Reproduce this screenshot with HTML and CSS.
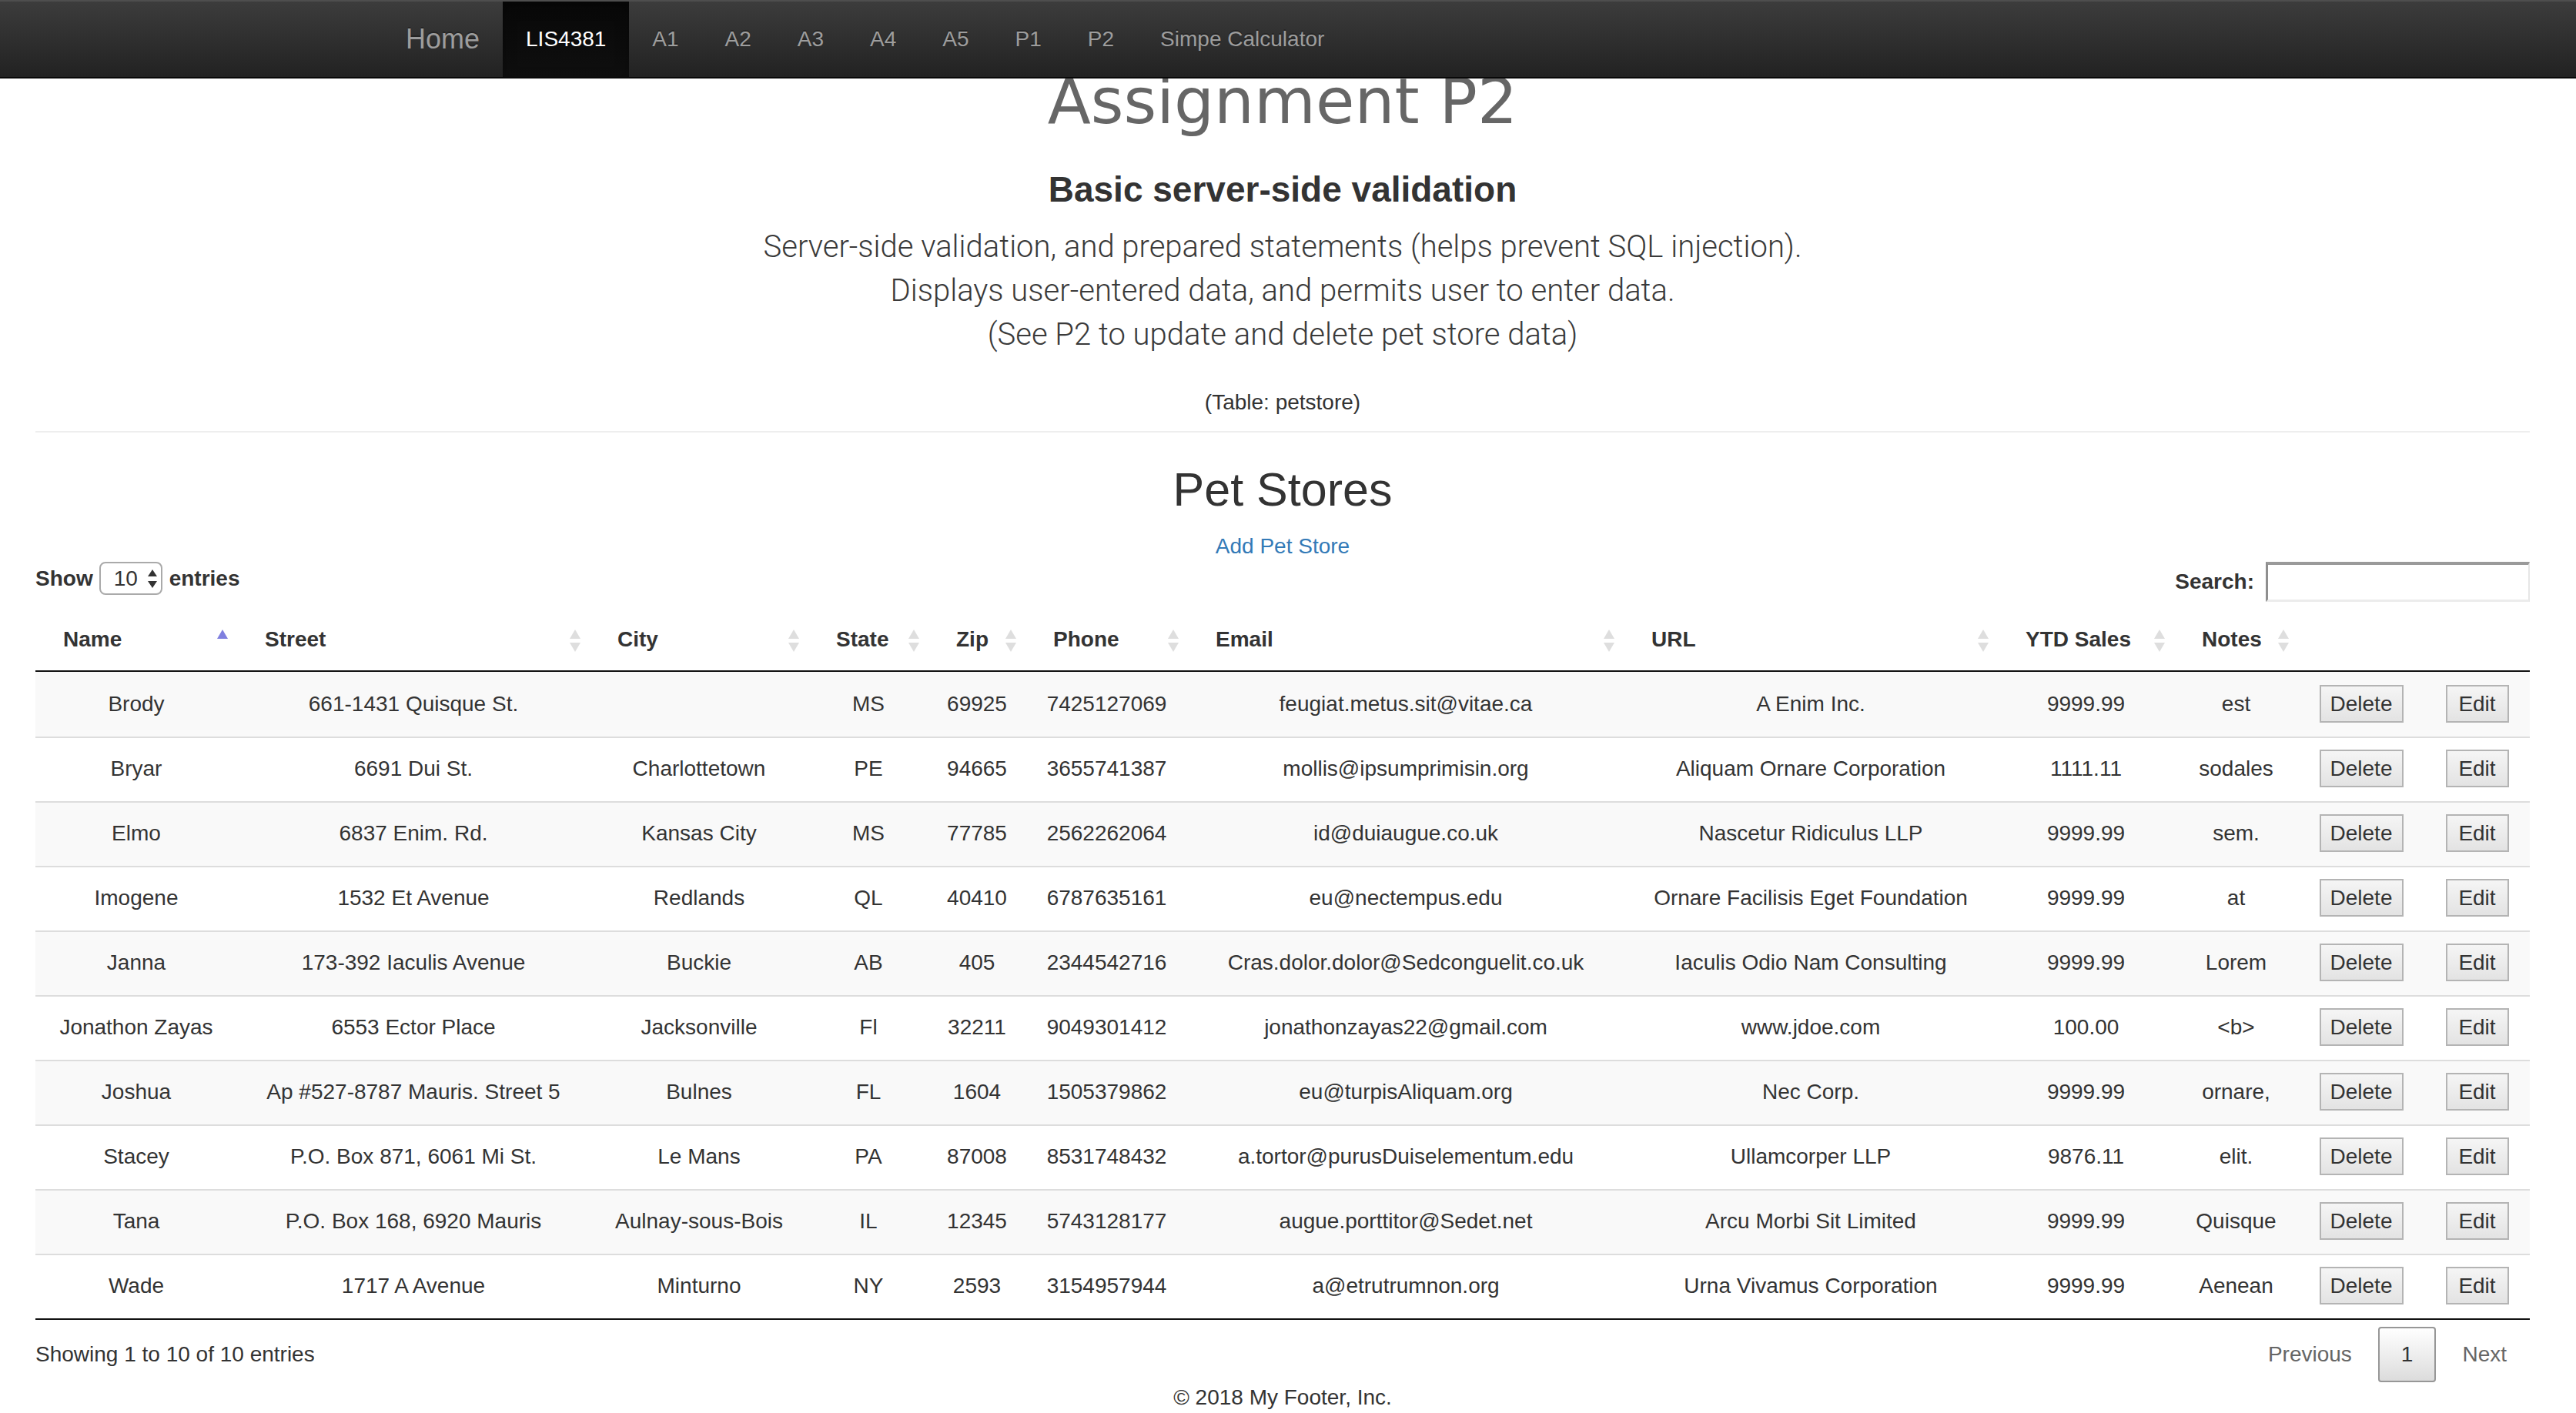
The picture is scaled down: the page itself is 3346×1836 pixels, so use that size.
FILE: index.html
```html
<!DOCTYPE html>
<html lang="en">
<head>
<meta charset="utf-8">
<title>Assignment P2</title>
<link rel="stylesheet" href="styles.css">
</head>
<body>
<nav class="navbar">
  <a class="brand" href="#">Home</a>
  <ul class="nav">
    <li class="active"><a href="#">LIS4381</a></li>
    <li><a href="#">A1</a></li>
    <li><a href="#">A2</a></li>
    <li><a href="#">A3</a></li>
    <li><a href="#">A4</a></li>
    <li><a href="#">A5</a></li>
    <li><a href="#">P1</a></li>
    <li><a href="#">P2</a></li>
    <li><a href="#">Simpe Calculator</a></li>
  </ul>
</nav>

<main class="page">
  <header class="intro">
    <h1 class="title">Assignment P2</h1>
    <h2 class="subtitle">Basic server-side validation</h2>
    <p class="lead">Server-side validation, and prepared statements (helps prevent SQL injection).<br>Displays user-entered data, and permits user to enter data.<br>(See P2 to update and delete pet store data)</p>
    <p class="table-name">(Table: petstore)</p>
  </header>

  <hr class="divider">

  <section class="stores">
    <h2 class="stores-title">Pet Stores</h2>
    <a class="add-link" href="#">Add Pet Store</a>

    <div class="dt-controls">
      <label class="dt-length">Show
        <span class="len-select"><span class="len-value">10</span>
          <svg class="len-arrows" width="14" height="24" viewBox="0 0 14 24"><path d="M7 0 L13 9 L1 9 Z" fill="#333"/><path d="M1 15 L13 15 L7 24 Z" fill="#333"/></svg>
        </span>entries</label>
      <label class="dt-filter">Search:<input class="search-input" type="search"></label>
    </div>

    <table class="data">
      <colgroup>
        <col class="c-name"><col class="c-street"><col class="c-city"><col class="c-state"><col class="c-zip"><col class="c-phone"><col class="c-email"><col class="c-url"><col class="c-ytd"><col class="c-notes"><col class="c-del"><col class="c-edit">
      </colgroup>
      <thead>
        <tr>
          <th class="sort-asc">Name</th>
          <th class="sortable">Street</th>
          <th class="sortable">City</th>
          <th class="sortable">State</th>
          <th class="sortable">Zip</th>
          <th class="sortable">Phone</th>
          <th class="sortable">Email</th>
          <th class="sortable">URL</th>
          <th class="sortable">YTD Sales</th>
          <th class="sortable">Notes</th>
          <th></th>
          <th></th>
        </tr>
      </thead>
      <tbody>
        <tr class="odd"><td>Brody</td><td>661-1431 Quisque St.</td><td></td><td>MS</td><td>69925</td><td>7425127069</td><td>feugiat.metus.sit@vitae.ca</td><td>A Enim Inc.</td><td>9999.99</td><td>est</td><td><button class="btn btn-delete">Delete</button></td><td><button class="btn btn-edit">Edit</button></td></tr>
        <tr><td>Bryar</td><td>6691 Dui St.</td><td>Charlottetown</td><td>PE</td><td>94665</td><td>3655741387</td><td>mollis@ipsumprimisin.org</td><td>Aliquam Ornare Corporation</td><td>1111.11</td><td>sodales</td><td><button class="btn btn-delete">Delete</button></td><td><button class="btn btn-edit">Edit</button></td></tr>
        <tr class="odd"><td>Elmo</td><td>6837 Enim. Rd.</td><td>Kansas City</td><td>MS</td><td>77785</td><td>2562262064</td><td>id@duiaugue.co.uk</td><td>Nascetur Ridiculus LLP</td><td>9999.99</td><td>sem.</td><td><button class="btn btn-delete">Delete</button></td><td><button class="btn btn-edit">Edit</button></td></tr>
        <tr><td>Imogene</td><td>1532 Et Avenue</td><td>Redlands</td><td>QL</td><td>40410</td><td>6787635161</td><td>eu@nectempus.edu</td><td>Ornare Facilisis Eget Foundation</td><td>9999.99</td><td>at</td><td><button class="btn btn-delete">Delete</button></td><td><button class="btn btn-edit">Edit</button></td></tr>
        <tr class="odd"><td>Janna</td><td>173-392 Iaculis Avenue</td><td>Buckie</td><td>AB</td><td>405</td><td>2344542716</td><td>Cras.dolor.dolor@Sedconguelit.co.uk</td><td>Iaculis Odio Nam Consulting</td><td>9999.99</td><td>Lorem</td><td><button class="btn btn-delete">Delete</button></td><td><button class="btn btn-edit">Edit</button></td></tr>
        <tr><td>Jonathon Zayas</td><td>6553 Ector Place</td><td>Jacksonville</td><td>Fl</td><td>32211</td><td>9049301412</td><td>jonathonzayas22@gmail.com</td><td>www.jdoe.com</td><td>100.00</td><td>&lt;b&gt;</td><td><button class="btn btn-delete">Delete</button></td><td><button class="btn btn-edit">Edit</button></td></tr>
        <tr class="odd"><td>Joshua</td><td>Ap #527-8787 Mauris. Street 5</td><td>Bulnes</td><td>FL</td><td>1604</td><td>1505379862</td><td>eu@turpisAliquam.org</td><td>Nec Corp.</td><td>9999.99</td><td>ornare,</td><td><button class="btn btn-delete">Delete</button></td><td><button class="btn btn-edit">Edit</button></td></tr>
        <tr><td>Stacey</td><td>P.O. Box 871, 6061 Mi St.</td><td>Le Mans</td><td>PA</td><td>87008</td><td>8531748432</td><td>a.tortor@purusDuiselementum.edu</td><td>Ullamcorper LLP</td><td>9876.11</td><td>elit.</td><td><button class="btn btn-delete">Delete</button></td><td><button class="btn btn-edit">Edit</button></td></tr>
        <tr class="odd"><td>Tana</td><td>P.O. Box 168, 6920 Mauris</td><td>Aulnay-sous-Bois</td><td>IL</td><td>12345</td><td>5743128177</td><td>augue.porttitor@Sedet.net</td><td>Arcu Morbi Sit Limited</td><td>9999.99</td><td>Quisque</td><td><button class="btn btn-delete">Delete</button></td><td><button class="btn btn-edit">Edit</button></td></tr>
        <tr><td>Wade</td><td>1717 A Avenue</td><td>Minturno</td><td>NY</td><td>2593</td><td>3154957944</td><td>a@etrutrumnon.org</td><td>Urna Vivamus Corporation</td><td>9999.99</td><td>Aenean</td><td><button class="btn btn-delete">Delete</button></td><td><button class="btn btn-edit">Edit</button></td></tr>
      </tbody>
    </table>

    <div class="dt-bottom">
      <div class="dt-info">Showing 1 to 10 of 10 entries</div>
      <div class="paginate">
        <a class="pg pg-disabled">Previous</a>
        <a class="pg pg-current">1</a>
        <a class="pg pg-disabled">Next</a>
      </div>
    </div>
  </section>

  <footer class="footer">© 2018 My Footer, Inc.</footer>
</main>
</body>
</html>
```
FILE: styles.css
```css
html, body {
  margin: 0;
  padding: 0;
  overflow: hidden;
}

body {
  font-family: "Liberation Sans", Arial, sans-serif;
  font-size: 28px;
  line-height: 40px;
  color: #333;
  background: #fff;
}

/* ---------- navbar ---------- */
.navbar {
  position: fixed;
  top: 0;
  left: 0;
  right: 0;
  z-index: 10;
  height: 98px;
  display: flex;
  padding-left: 497px;
  background: linear-gradient(#3c3c3c, #222);
  border-top: 2px solid #4e4e4e;
  border-bottom: 2px solid #080808;
}

.brand {
  font-size: 36px;
  line-height: 98px;
  padding: 0 30px;
  color: #9d9d9d;
  text-decoration: none;
  text-shadow: 0 -2px 0 rgba(0, 0, 0, .25);
}

.nav {
  display: flex;
  list-style: none;
  margin: 0;
  padding: 0;
}

.nav a {
  display: block;
  padding: 0 30px;
  line-height: 98px;
  font-size: 28px;
  color: #9d9d9d;
  text-decoration: none;
  text-shadow: 0 -2px 0 rgba(0, 0, 0, .25);
}

.nav .active a {
  color: #fff;
  background: linear-gradient(#080808, #0f0f0f);
  box-shadow: inset 0 6px 18px rgba(0, 0, 0, .25);
}

/* ---------- page ---------- */
.page {
  padding: 87px 60px 0 46px;
}

.intro {
  text-align: center;
}

.title {
  margin: 0;
  font-family: "DejaVu Sans", sans-serif;
  font-weight: normal;
  font-size: 82px;
  line-height: 90px;
  color: #666;
}

.subtitle {
  margin: 44px 0 0;
  font-size: 46px;
  line-height: 50px;
  font-weight: bold;
  color: #333;
}

.lead {
  margin: 21px 0 0;
  font-family: Roboto, "Liberation Sans", sans-serif;
  font-weight: 300;
  font-size: 40px;
  line-height: 57px;
  color: #3a3a3a;
}

.table-name {
  margin: 40px 0 0;
}

.divider {
  margin: 17px 0 0;
  border: 0;
  border-top: 2px solid #eee;
  height: 0;
}

.stores-title {
  margin: 41px 0 0;
  font-size: 61px;
  line-height: 67px;
  font-weight: normal;
  text-align: center;
  color: #333;
}

.add-link {
  display: block;
  width: max-content;
  margin: 20px auto 0;
  color: #337ab7;
  text-decoration: none;
}

/* ---------- datatable controls ---------- */
.dt-controls {
  display: flex;
  justify-content: space-between;
  align-items: flex-start;
  height: 52px;
  margin-bottom: 10px;
}

.dt-length,
.dt-filter {
  display: flex;
  align-items: center;
  font-weight: bold;
}

.dt-length {
  height: 43px;
}

.len-select {
  display: inline-flex;
  align-items: center;
  box-sizing: border-box;
  width: 82px;
  height: 43px;
  margin: 0 9px 0 8px;
  padding-left: 17px;
  border: 2px solid #aaa;
  border-radius: 8px;
  font-weight: normal;
}

.len-arrows {
  margin-left: 12px;
}

.search-input {
  box-sizing: border-box;
  width: 343px;
  height: 52px;
  margin: 0 0 0 15px;
  border-style: solid;
  border-width: 4px 2px 3px 3px;
  border-color: #9a9a9a #e6e6e6 #ececec #8f8f8f;
  background: #fff;
}

/* ---------- table ---------- */
.data {
  width: 100%;
  table-layout: fixed;
  border-collapse: separate;
  border-spacing: 0;
  border-bottom: 2px solid #111;
}

.c-name { width: 262px; }
.c-street { width: 458px; }
.c-city { width: 284px; }
.c-state { width: 156px; }
.c-zip { width: 126px; }
.c-phone { width: 211px; }
.c-email { width: 566px; }
.c-url { width: 486px; }
.c-ytd { width: 229px; }
.c-notes { width: 161px; }
.c-del { width: 164px; }
.c-edit { width: 137px; }

.data thead tr {
  height: 81px;
}

.data th {
  position: relative;
  padding: 0 36px 2px;
  text-align: left;
  font-weight: bold;
  white-space: nowrap;
  border-bottom: 2px solid #111;
  vertical-align: middle;
}

.data th.sortable::before,
.data th.sortable::after,
.data th.sort-asc::before {
  content: "";
  position: absolute;
  right: 12px;
  width: 0;
  height: 0;
  border-left: 7px solid transparent;
  border-right: 7px solid transparent;
}

.data th.sortable::before,
.data th.sort-asc::before {
  top: calc(50% - 14px);
  border-bottom: 12px solid #dedede;
}

.data th.sort-asc::before {
  border-bottom-color: #7f7fdf;
}

.data th.sortable::after {
  top: calc(50% + 3px);
  border-top: 12px solid #dedede;
}

.data tbody tr {
  height: 84px;
}

.data td {
  padding: 0 20px 3px;
  text-align: center;
  white-space: nowrap;
  vertical-align: middle;
  border-top: 2px solid #ddd;
}

.data tbody tr:first-child td {
  border-top-color: transparent;
}

.data tr.odd td {
  background: #f9f9f9;
}

.btn {
  box-sizing: border-box;
  height: 49px;
  padding: 0;
  font-family: "Liberation Sans", Arial, sans-serif;
  font-size: 28px;
  line-height: 45px;
  color: #333;
  background: linear-gradient(#f5f5f5, #e3e3e3);
  border: 2px solid #b4b4b4;
  border-radius: 0;
  vertical-align: middle;
}

.btn-delete { width: 109px; }
.btn-edit { width: 82px; }

/* ---------- bottom bar ---------- */
.dt-bottom {
  display: flex;
  justify-content: space-between;
  align-items: center;
  height: 71px;
  margin-top: 9px;
}

.paginate {
  display: flex;
  align-items: center;
}

.pg {
  display: block;
  margin-left: 4px;
  padding: 14px 28px;
  border: 2px solid transparent;
  border-radius: 4px;
  line-height: 40px;
  color: #666;
}

.pg-current {
  color: #333;
  border-color: #979797;
  background: linear-gradient(#fff, #dcdcdc);
}

.footer {
  margin-top: 1px;
  text-align: center;
  line-height: 40px;
}
```
